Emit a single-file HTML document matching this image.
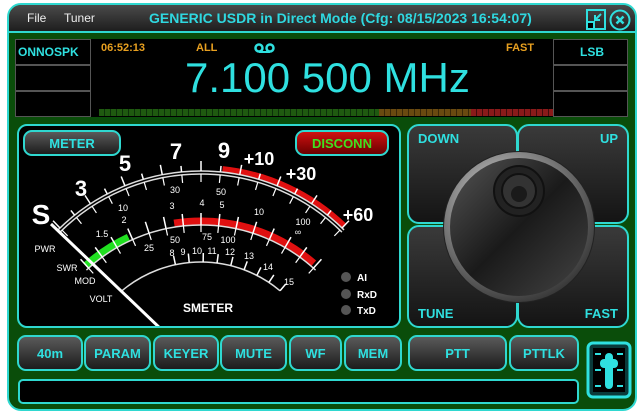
<!DOCTYPE html>
<html><head><meta charset="utf-8"><style>
*{box-sizing:border-box;margin:0;padding:0}
body{width:640px;height:414px;background:#fff;position:relative;overflow:hidden;font-family:"Liberation Sans",sans-serif}
.win{position:absolute;left:7px;top:3px;width:630px;height:408px;border:2px solid #2fd8d0;border-radius:14px;background:#0a4d0a;overflow:hidden}
.title{position:absolute;left:0;top:0;width:100%;height:28px;background:linear-gradient(#4a4a4a,#1e1e1e);border-bottom:2px solid #2fd8d0;border-radius:12px 12px 0 0}
.a{position:absolute}
.t{color:#2fe0e0;font-weight:bold}
.disp{position:absolute;left:6px;top:34px;width:613px;height:78px;background:#000}
.cell{position:absolute;border:1px solid #555;background:#000}
.btn{position:absolute;border:2px solid #2fd8d0;border-radius:9px;background:linear-gradient(#5a5a5a,#1c1c1c);color:#2fe0e0;font-weight:bold;font-size:13px;display:flex;align-items:center;justify-content:center}
.pad{position:absolute;border:2px solid #2fd8d0;border-radius:12px;background:linear-gradient(#3a3a3a,#141414);color:#2fe0e0;font-weight:bold;font-size:13px}
</style></head><body>
<div class="win">
 <div class="title">
  <div class="a" style="left:18px;top:6px;color:#eee;font-size:12px">File</div>
  <div class="a" style="left:55px;top:6px;color:#eee;font-size:12px">Tuner</div>
  <div class="a t" style="left:140px;top:5px;font-size:14px;color:#2fd8e0">GENERIC USDR in Direct Mode (Cfg: 08/15/2023 16:54:07)</div>
  <svg class="a" style="left:576px;top:3px" width="48" height="24">
   <rect x="2" y="2" width="18" height="19" fill="none" stroke="#2fe0e0" stroke-width="2"/>
   <rect x="2" y="14" width="7" height="7" fill="#000" stroke="#2fe0e0" stroke-width="2"/>
   <path d="M16 6 L10 12 M10 7 V12 H15" stroke="#2fe0e0" stroke-width="2" fill="none"/>
   <circle cx="35" cy="12" r="9.5" fill="none" stroke="#2fe0e0" stroke-width="2"/>
   <path d="M31.5 8.5 L38.5 15.5 M38.5 8.5 L31.5 15.5" stroke="#2fe0e0" stroke-width="2.5"/>
  </svg>
 </div>
 <div class="disp">
  <div class="cell" style="left:0;top:0;width:76px;height:26px"></div>
  <div class="cell" style="left:0;top:26px;width:76px;height:26px"></div>
  <div class="cell" style="left:0;top:52px;width:76px;height:26px"></div>
  <div class="a t" style="left:3px;top:6px;font-size:12px">ONNOSPK</div>
  <div class="cell" style="left:538px;top:0;width:75px;height:26px"></div>
  <div class="cell" style="left:538px;top:26px;width:75px;height:26px"></div>
  <div class="cell" style="left:538px;top:52px;width:75px;height:26px"></div>
  <div class="a t" style="left:565px;top:6px;font-size:12px">LSB</div>
  <div class="a" style="left:86px;top:3px;color:#e8a020;font-size:11px;font-weight:bold">06:52:13</div>
  <div class="a" style="left:181px;top:3px;color:#e8a020;font-size:11px;font-weight:bold">ALL</div>
  <div class="a" style="left:491px;top:3px;color:#e8a020;font-size:11px;font-weight:bold">FAST</div>
  <svg class="a" style="left:239px;top:3px" width="22" height="12"><circle cx="5" cy="6" r="3.5" fill="none" stroke="#2fe0e0" stroke-width="2.5"/><circle cx="16" cy="6" r="3.5" fill="none" stroke="#2fe0e0" stroke-width="2.5"/><path d="M5 10H16" stroke="#2fe0e0" stroke-width="2"/></svg>
  <div class="a" style="left:170px;top:14px;color:#2fe0e0;font-size:42px;line-height:50px">7.100 500 MHz</div>
  <div class="a" style="left:84px;top:70px;width:280px;height:7px;background:repeating-linear-gradient(90deg,#1f5a10 0 5px,#0c300a 5px 6px)"></div>
  <div class="a" style="left:364px;top:70px;width:92px;height:7px;background:repeating-linear-gradient(90deg,#6a4a10 0 5px,#3a2808 5px 6px)"></div>
  <div class="a" style="left:456px;top:70px;width:82px;height:7px;background:repeating-linear-gradient(90deg,#8a1a1a 0 5px,#400c0c 5px 6px)"></div>
 </div>
 <div class="a" style="left:8px;top:119px;width:384px;height:204px;background:#000;border:2px solid #2fd8d0;border-radius:10px;overflow:hidden">
  <svg id="m" width="384" height="204" viewBox="16 121 384 204" style="position:absolute;left:-2px;top:-2px"></svg>
  <div class="btn" style="left:4px;top:4px;width:98px;height:26px;font-size:13px">METER</div>
  <div class="btn" style="left:276px;top:4px;width:94px;height:26px;font-size:13px;background:linear-gradient(#d01010,#6a0000);color:#40e020">DISCONN</div>
 </div>
 <div class="pad" style="left:398px;top:119px;width:111px;height:100px"><span class="a" style="left:9px;top:5px">DOWN</span></div>
 <div class="pad" style="left:508px;top:119px;width:112px;height:100px"><span class="a" style="right:9px;top:5px">UP</span></div>
 <div class="pad" style="left:398px;top:220px;width:111px;height:103px"><span class="a" style="left:9px;bottom:5px">TUNE</span></div>
 <div class="pad" style="left:508px;top:220px;width:112px;height:103px"><span class="a" style="right:9px;bottom:5px">FAST</span></div>
 <svg class="a" style="left:433px;top:145px" width="154" height="154">
  <defs>
   <radialGradient id="rim" cx="40%" cy="35%" r="70%"><stop offset="0" stop-color="#eee"/><stop offset=".5" stop-color="#888"/><stop offset="1" stop-color="#333"/></radialGradient>
   <linearGradient id="face" x1="0" y1="0" x2="1" y2="1"><stop offset="0" stop-color="#555"/><stop offset=".5" stop-color="#1a1a1a"/><stop offset="1" stop-color="#444"/></linearGradient>
  </defs>
  <circle cx="77" cy="77" r="76" fill="#222"/>
  <circle cx="77" cy="77" r="75" fill="url(#rim)"/>
  <circle cx="77" cy="77" r="69" fill="url(#face)"/>
  <circle cx="77" cy="41" r="25" fill="#222" stroke="#111" stroke-width="2"/>
  <circle cx="77" cy="41" r="17" fill="#333" stroke="#111" stroke-width="2"/>
  <circle cx="77" cy="44" r="8" fill="#1a1a1a"/>
 </svg>
 <div class="btn" style="left:8px;top:330px;width:66px;height:36px">40m</div>
 <div class="btn" style="left:75px;top:330px;width:67px;height:36px">PARAM</div>
 <div class="btn" style="left:144px;top:330px;width:66px;height:36px">KEYER</div>
 <div class="btn" style="left:211px;top:330px;width:67px;height:36px">MUTE</div>
 <div class="btn" style="left:280px;top:330px;width:53px;height:36px">WF</div>
 <div class="btn" style="left:335px;top:330px;width:58px;height:36px">MEM</div>
 <div class="btn" style="left:399px;top:330px;width:99px;height:36px">PTT</div>
 <div class="btn" style="left:500px;top:330px;width:70px;height:36px">PTTLK</div>
 <div class="a" style="left:9px;top:374px;width:561px;height:25px;background:#000;border:2px solid #2fd8d0;border-radius:5px"></div>
 <svg class="a" style="left:577px;top:336px" width="46" height="58">
  <rect x="2" y="2" width="42" height="54" rx="5" fill="#0a3a3a" stroke="#2fe0e0" stroke-width="3"/>
  <rect x="7" y="7" width="32" height="44" fill="#000"/>
  <path d="M9 13h6M31 13h6M9 29h6M31 29h6M9 45h6M31 45h6" stroke="#2fe0e0" stroke-width="2"/>
  <rect x="14" y="18" width="18" height="9" rx="4" fill="#2fe0e0"/>
  <rect x="19" y="12" width="8" height="36" rx="4" fill="#2fe0e0"/>
 </svg>
</div>
<script>
var s=document.getElementById('m'),h='';
function P(cx,cy,r,a){var t=a*Math.PI/180;return [cx+r*Math.sin(t),cy-r*Math.cos(t)];}
function arc(cx,cy,r,a1,a2,c,w){var p=P(cx,cy,r,a1),q=P(cx,cy,r,a2);h+='<path d="M'+p[0]+' '+p[1]+' A'+r+' '+r+' 0 0 1 '+q[0]+' '+q[1]+'" fill="none" stroke="'+c+'" stroke-width="'+w+'"/>';}
function tk(cx,cy,r1,r2,a,c,w){var p=P(cx,cy,r1,a),q=P(cx,cy,r2,a);h+='<line x1="'+p[0]+'" y1="'+p[1]+'" x2="'+q[0]+'" y2="'+q[1]+'" stroke="'+c+'" stroke-width="'+(w||1.5)+'"/>';}
arc(200,371,206,6,44,'#e01010',6);
arc(200,371,203,-44.8,44.8,'#ddd',1.5);arc(200,371,200,-44.8,44.8,'#ddd',1.5);
for(var a=-44;a<=44;a+=5.5){tk(200,371,203,a%11==0?213:209,a,'#fff',1.5);tk(200,371,200,192,a,'#fff',1.2);}
arc(200,390,172,-42,-25,'#20e020',7);
arc(200,390,172,-9,41,'#e01010',7);
arc(200,390,168,-43,43,'#ddd',1.5);
for(var a=-42;a<=42;a+=6){tk(200,390,168,180,a,'#fff',1.5);tk(200,390,168,161,a,'#fff',1.2);}
arc(200,382,123,-40,40,'#ddd',1.5);
for(var a=-12;a<=40;a+=6.5){tk(200,382,123,132,a,'#fff',1.5);}
function T(x,y,t,sz,b){h+='<text x="'+x+'" y="'+y+'" fill="#fff" font-size="'+sz+'" font-family="Liberation Sans" font-weight="'+(b?'bold':'normal')+'" text-anchor="middle">'+t+'</text>';}
T(40,221,'S',28,1);T(80,193,'3',22,1);T(124,168,'5',22,1);T(175,156,'7',22,1);T(223,155,'9',22,1);
T(258,162,'+10',18,1);T(300,177,'+30',18,1);T(357,218,'+60',18,1);
T(122,208,'10',9);T(174,190,'30',9);T(220,192,'50',9);T(302,222,'100',9);
T(101,234,'1.5',9);T(123,220,'2',9);T(171,206,'3',9);T(201,203,'4',9);T(221,205,'5',9);T(258,212,'10',9);T(297,232,'∞',9);
T(148,248,'25',9);T(174,240,'50',9);T(206,237,'75',9);T(227,240,'100',9);
T(171,253,'8',9);T(182,252,'9',9);T(196,251,'10',9);T(211,251,'11',9);T(229,252,'12',9);T(248,256,'13',9);T(267,267,'14',9);T(288,282,'15',9);
T(44,249,'PWR',9);T(66,268,'SWR',9);T(84,281,'MOD',9);T(100,299,'VOLT',9);
T(207,309,'SMETER',12,1);
[[345,274,'AI'],[345,291,'RxD'],[345,307,'TxD']].forEach(function(l){h+='<circle cx="'+l[0]+'" cy="'+l[1]+'" r="5" fill="#555"/>';h+='<text x="356" y="'+(l[1]+4)+'" fill="#fff" font-size="10" font-family="Liberation Sans" font-weight="bold">'+l[2]+'</text>';});
h+='<line x1="50" y1="221" x2="162" y2="328" stroke="#fff" stroke-width="3"/>';
s.innerHTML=h;
</script>
</body></html>
